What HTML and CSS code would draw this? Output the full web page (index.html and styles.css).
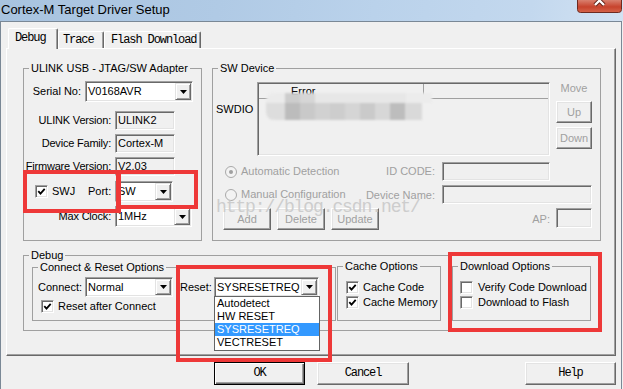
FILE: index.html
```html
<!DOCTYPE html>
<html>
<head>
<meta charset="utf-8">
<title>Cortex-M Target Driver Setup</title>
<link rel="stylesheet" href="styles.css">
</head>
<body>
<div class="win">
  <div class="titlebar">
    <span class="title">Cortex-M Target Driver Setup</span>
    <div class="close">
      <svg width="45" height="13" viewBox="0 0 45 13">
        <defs>
          <linearGradient id="cg" x1="0" y1="0" x2="0" y2="1">
            <stop offset="0" stop-color="#d9806e"/>
            <stop offset="0.55" stop-color="#c7432d"/>
            <stop offset="1" stop-color="#d5654b"/>
          </linearGradient>
        </defs>
        <path d="M0.5 0 V9.5 Q0.5 12.5 3.5 12.5 H41.5 Q44.5 12.5 44.5 9.5 V0" fill="url(#cg)" stroke="#6e2a20"/>
        <path d="M18 -4 L27 5 M27 -4 L18 5" stroke="#5a1d14" stroke-width="4.2"/>
        <path d="M18 -4 L27 5 M27 -4 L18 5" stroke="#ffffff" stroke-width="2.4"/>
      </svg>
    </div>
  </div>

  <div class="client">
    <div class="tabs">
      <div class="tab sel">Debug</div>
      <div class="tab t-trace">Trace</div>
      <div class="tab t-flash">Flash Download</div>
    </div>

    <div class="panel">
      <div class="row1">
        <fieldset class="grp ulink">
          <legend>ULINK USB - JTAG/SW Adapter</legend>
          <div class="serial">
            <span class="lbl-s">Serial No:</span>
            <div class="combo w108">
              <span class="ctext">V0168AVR</span>
              <span class="cbtn"><svg width="7" height="4" viewBox="0 0 7 4"><path d="M0 0H7L3.5 4Z"/></svg></span>
            </div>
          </div>
          <div class="irow r-ver"><span class="lbl">ULINK Version:</span><div class="field w60">ULINK2</div></div>
          <div class="irow r-fam"><span class="lbl">Device Family:</span><div class="field w60">Cortex-M</div></div>
          <div class="irow r-fw"><span class="lbl">Firmware Version:</span><div class="field w60">V2.03</div></div>
          <div class="swj">
            <span class="swj-left">
              <span class="chk"><svg width="9" height="9" viewBox="0 0 9 9"><path d="M1.3 4.2 L3.5 6.6 L7.7 1.8" fill="none" stroke="#000" stroke-width="1.8"/></svg></span>
              <span>SWJ</span>
            </span>
            <span class="lbl-port">Port:</span>
            <div class="combo w58">
              <span class="ctext">SW</span>
              <span class="cbtn"><svg width="7" height="4" viewBox="0 0 7 4"><path d="M0 0H7L3.5 4Z"/></svg></span>
            </div>
          </div>
          <div class="irow r-clk"><span class="lbl">Max Clock:</span>
            <div class="combo w77">
              <span class="ctext">1MHz</span>
              <span class="cbtn"><svg width="7" height="4" viewBox="0 0 7 4"><path d="M0 0H7L3.5 4Z"/></svg></span>
            </div>
          </div>
        </fieldset>

        <fieldset class="grp swdev">
          <legend>SW Device</legend>
          <div class="swtop">
            <span class="swdio">SWDIO</span>
            <div class="list">
              <div class="lhead"><span class="hc1">Error</span><span class="hc2"></span></div>
            </div>
            <div class="movecol">
              <span class="dis movelbl">Move</span>
              <div class="btn dis up">Up</div>
              <div class="btn dis down">Down</div>
            </div>
          </div>
          <div class="swrow r-auto">
            <span class="radio"><svg width="12" height="12" viewBox="0 0 12 12"><circle cx="6" cy="6" r="5.5" fill="#f3f3f3" stroke="#a9a9a9"/><circle cx="6" cy="6" r="2" fill="#a0a0a0"/></svg></span>
            <span class="dis">Automatic Detection</span>
            <span class="dis rlbl">ID CODE:</span>
            <div class="field w108"></div>
          </div>
          <div class="swrow r-man">
            <span class="radio"><svg width="12" height="12" viewBox="0 0 12 12"><circle cx="6" cy="6" r="5.5" fill="#f3f3f3" stroke="#a9a9a9"/></svg></span>
            <span class="dis">Manual Configuration</span>
            <span class="dis rlbl devlbl">Device Name:</span>
            <div class="field w150"></div>
          </div>
          <div class="swrow r-btns">
            <div class="btn dis sb">Add</div>
            <div class="btn dis sb">Delete</div>
            <div class="btn dis sb">Update</div>
            <span class="dis rlbl aplbl">AP:</span>
            <div class="field w36 aph"></div>
          </div>
        </fieldset>
      </div>

      <fieldset class="grp debug">
        <legend>Debug</legend>
        <div class="drow">
          <fieldset class="grp conn">
            <legend>Connect &amp; Reset Options</legend>
            <div class="crow1">
              <span class="lbl-c">Connect:</span>
              <div class="combo w88 h20">
                <span class="ctext">Normal</span>
                <span class="cbtn"><svg width="7" height="4" viewBox="0 0 7 4"><path d="M0 0H7L3.5 4Z"/></svg></span>
              </div>
              <span class="lbl-r">Reset:</span>
              <div class="combo w105 h20">
                <span class="ctext">SYSRESETREQ</span>
                <span class="cbtn"><svg width="7" height="4" viewBox="0 0 7 4"><path d="M0 0H7L3.5 4Z"/></svg></span>
              </div>
            </div>
            <div class="crow2">
              <span class="chk"><svg width="9" height="9" viewBox="0 0 9 9"><path d="M1.3 4.2 L3.5 6.6 L7.7 1.8" fill="none" stroke="#000" stroke-width="1.8"/></svg></span>
              <span>Reset after Connect</span>
            </div>
          </fieldset>

          <fieldset class="grp cache">
            <legend>Cache Options</legend>
            <div class="cbrow first">
              <span class="chk"><svg width="9" height="9" viewBox="0 0 9 9"><path d="M1.3 4.2 L3.5 6.6 L7.7 1.8" fill="none" stroke="#000" stroke-width="1.8"/></svg></span>
              <span>Cache Code</span>
            </div>
            <div class="cbrow">
              <span class="chk"><svg width="9" height="9" viewBox="0 0 9 9"><path d="M1.3 4.2 L3.5 6.6 L7.7 1.8" fill="none" stroke="#000" stroke-width="1.8"/></svg></span>
              <span>Cache Memory</span>
            </div>
          </fieldset>

          <fieldset class="grp dlopt">
            <legend>Download Options</legend>
            <div class="cbrow first dl">
              <span class="chk"></span>
              <span>Verify Code Download</span>
            </div>
            <div class="cbrow dl">
              <span class="chk"></span>
              <span>Download to Flash</span>
            </div>
          </fieldset>
        </div>
      </fieldset>
    </div>

    <div class="btnrow">
      <div class="btn pb ok">OK</div>
      <div class="btn pb cancel">Cancel</div>
      <div class="btn pb help">Help</div>
    </div>
  </div>

  <!-- overlays -->
  <div class="blur">
    <div class="b1"></div>
    <div class="b2"></div>
  </div>
  <div class="watermark">http://blog.csdn.net/</div>

  <div class="ddlist">
    <div>Autodetect</div>
    <div>HW RESET</div>
    <div class="hl">SYSRESETREQ</div>
    <div>VECTRESET</div>
  </div>

  <div class="redbox rb-swj"></div>
  <div class="redbox rb-port"></div>
  <div class="redbox rb-reset"></div>
  <div class="redbox rb-dl"></div>
</div>
</body>
</html>
```

FILE: styles.css
```css
* { box-sizing: border-box; }
html, body { margin: 0; padding: 0; }
body {
  width: 623px;
  height: 389px;
  overflow: hidden;
  background: #f0f0f0;
  font-family: "Liberation Sans", Arial, sans-serif;
  font-size: 11px;
  line-height: 13px;
  color: #000;
}
.win { position: relative; width: 623px; height: 389px; background: #f0f0f0; }

/* title bar */
.titlebar {
  height: 21px;
  display: flex;
  align-items: flex-start;
  background: linear-gradient(100deg, #a8c3df 0%, #b0cae5 35%, #bad2eb 60%, #c3d8ee 85%, #d2e2f3 100%);
}
.title { font-size: 13px; line-height: 19px; padding-left: 1px; white-space: nowrap; }
.close { margin-left: auto; margin-right: 1px; width: 45px; height: 13px; }
.close svg { display: block; }

/* client area */
.client {
  width: 622px;
  height: 368px;
  border: 1px solid #7a8896;
  border-bottom: none;
}

/* tabs */
.tabs { display: flex; align-items: flex-end; height: 26px; padding-left: 7px; }
.tab {
  font-family: "Liberation Mono", monospace;
  font-size: 12px;
  letter-spacing: -1.1px;
  height: 17px;
  display: flex;
  align-items: center;
  background: #f0f0f0;
  border: 1px solid;
  border-bottom: none;
  border-color: #fff #696969 #696969 #fff;
  box-shadow: inset -1px 0 #a0a0a0;
  border-radius: 2px 2px 0 0;
  white-space: nowrap;
  color: #000;
}
.tab.sel { width: 50px; height: 21px; margin-bottom: -1px; position: relative; z-index: 2; padding-left: 6px; padding-bottom: 1px; }
.t-trace { width: 46px; padding-left: 4px; }
.t-flash { width: 97px; padding-left: 6px; }

.panel {
  margin-left: 5px;
  width: 610px;
  height: 308px;
  border: 1px solid;
  border-color: #fff #696969 #696969 #fff;
  box-shadow: inset -1px -1px #a0a0a0;
  padding: 13px 0 0 16px;
}

/* group boxes */
.grp { margin: 0; padding: 0; border: 1px solid #a0a0a0; min-width: 0; }
.grp > legend { padding: 0 2px; margin-left: 5px; font-size: 11px; line-height: 13px; white-space: nowrap; }

.row1 { display: flex; gap: 10px; }
.ulink { width: 179px; height: 179px; }
.swdev { width: 389px; height: 179px; }

/* generic controls */
.field {
  height: 19px;
  background: #f0f0f0;
  border: 1px solid;
  border-color: #a0a0a0 #fff #fff #a0a0a0;
  box-shadow: inset 1px 1px #696969, inset -1px -1px #e3e3e3;
  padding-left: 2px;
  line-height: 17px;
  white-space: nowrap;
}
.w60 { width: 60px; }
.w108 { width: 108px; }
.w150 { width: 150px; }
.w36 { width: 36px; }
.w58 { width: 58px; }
.w77 { width: 77px; }
.w88 { width: 88px; }
.w105 { width: 105px; }

.combo {
  display: flex;
  height: 21px;
  background: #fff;
  border: 1px solid;
  border-color: #a0a0a0 #fff #fff #a0a0a0;
  box-shadow: inset 1px 1px #696969, inset -1px -1px #e3e3e3;
  padding: 1px;
}
.combo.h20 { height: 20px; }
.ctext { flex: 1; padding-left: 1px; display: flex; align-items: center; white-space: nowrap; overflow: hidden; }
.cbtn {
  width: 16px;
  flex: none;
  background: #f0f0f0;
  border: 1px solid;
  border-color: #e3e3e3 #696969 #696969 #e3e3e3;
  box-shadow: inset 1px 1px #fff, inset -1px -1px #a0a0a0;
  display: flex;
  align-items: center;
  justify-content: center;
}
.cbtn svg { display: block; }

.chk {
  width: 13px;
  height: 13px;
  flex: none;
  background: #fff;
  border: 1px solid;
  border-color: #a0a0a0 #fff #fff #a0a0a0;
  box-shadow: inset 1px 1px #696969, inset -1px -1px #e3e3e3;
  display: flex;
  align-items: center;
  justify-content: center;
}
.chk svg { display: block; }

.btn {
  background: #f0f0f0;
  border: 1px solid;
  border-color: #fff #696969 #696969 #fff;
  box-shadow: inset -1px -1px #a0a0a0, inset 1px 1px #e3e3e3;
  display: flex;
  align-items: center;
  justify-content: center;
  white-space: nowrap;
}
.dis { color: #a0a0a0; white-space: nowrap; }

/* ULINK rows */
.serial { display: flex; align-items: center; height: 21px; margin-top: 6px; }
.lbl-s { width: 57px; margin-right: 4px; text-align: right; white-space: nowrap; }
.irow { display: flex; align-items: center; }
.lbl { width: 87px; margin-right: 4px; display: flex; justify-content: flex-end; white-space: nowrap; letter-spacing: -0.2px; }
.r-ver { margin-top: 9px; height: 19px; }
.r-fam, .r-fw { margin-top: 4px; height: 19px; }
.swj { display: flex; align-items: center; height: 21px; margin-top: 5px; padding-left: 11px; }
.swj-left { width: 53px; display: flex; align-items: center; gap: 4px; }
.lbl-port { width: 23px; margin-right: 4px; text-align: right; }
.r-clk { margin-top: 4px; height: 21px; }

/* SW device */
.swtop { display: flex; margin-top: 7px; height: 74px; }
.swdio { width: 44px; padding-left: 3px; margin-top: 21px; }
.list {
  width: 293px;
  height: 74px;
  background: #f0f0f0;
  border: 1px solid;
  border-color: #a0a0a0 #fff #fff #a0a0a0;
  box-shadow: inset 1px 1px #696969, inset -1px -1px #e3e3e3;
  padding: 1px;
}
.lhead { display: flex; height: 15px; border-bottom: 1px solid #a0a0a0; }
.hc1 { width: 165px; border-right: 1px solid #a0a0a0; padding-left: 32px; line-height: 14px; }
.hc2 { flex: 1; }
.movecol { width: 36px; margin-left: 6px; display: flex; flex-direction: column; align-items: stretch; }
.movelbl { text-align: center; }
.up { height: 22px; margin-top: 6px; }
.down { height: 22px; margin-top: 4px; }

.swrow { display: flex; align-items: center; padding-left: 12px; height: 19px; }
.radio { width: 12px; height: 12px; margin-right: 4px; flex: none; }
.radio svg { display: block; }
.rlbl { margin-left: auto; margin-right: 7px; }
.r-auto { margin-top: 6px; padding-right: 50px; }
.r-man { margin-top: 4px; padding-right: 8px; }
.devlbl { position: relative; top: 1px; }
.r-btns { margin-top: 4px; height: 22px; padding-left: 10px; padding-right: 8px; align-items: flex-start; gap: 6px; }
.sb { width: 48px; height: 22px; }
.aplbl { margin-right: 0; align-self: center; }
.aph { height: 20px; }

/* Debug group */
.debug { width: 579px; height: 82px; margin-top: 8px; }
.drow { display: flex; align-items: flex-start; margin-top: -2px; padding-left: 8px; }
.conn { width: 304px; height: 60px; margin-top: 1px; }
.cache { width: 104px; height: 61px; margin-left: 1px; }
.dlopt { width: 139px; height: 61px; margin-left: 11px; }

.crow1 { display: flex; align-items: center; height: 20px; margin-top: 3px; padding-left: 5px; }
.lbl-c { width: 47px; white-space: nowrap; }
.lbl-r { width: 34px; margin-left: 7px; white-space: nowrap; }
.crow2 { display: flex; align-items: center; gap: 4px; height: 13px; margin-top: 3px; padding-left: 8px; }

.cbrow { display: flex; align-items: center; gap: 4px; height: 15px; padding-left: 8px; white-space: nowrap; }
.cbrow.first { margin-top: 7px; }
.cbrow.dl { padding-left: 7px; gap: 5px; }

/* bottom buttons */
.btnrow { display: flex; margin-top: 6px; padding-left: 213px; }
.pb { height: 23px; font-family: "Liberation Mono", monospace; font-size: 12px; letter-spacing: -1.1px; }
.ok { width: 91px; border: 1px solid #000; box-shadow: inset 1px 1px #fff, inset -1px -1px #696969, inset -2px -2px #a0a0a0; }
.cancel { width: 92px; margin-left: 12px; }
.help { width: 91px; margin-left: 116px; }

/* overlays */
.blur { position: absolute; left: 266px; top: 93px; width: 166px; height: 28px; filter: blur(1.2px); }
.b1 {
  height: 10px;
  border-radius: 8px 0 0 0;
  background: linear-gradient(90deg, #ebebeb 0 19px, #cdcdcd 19px 34px, #d6d6d6 34px 49px, #e7e7e7 49px 140px, #ececec 140px 166px);
}
.b2 {
  height: 17px;
  width: 156px;
  border-radius: 0 0 0 8px;
  background: linear-gradient(90deg, #dddddd 0 19px, #bcbcbc 19px 34px, #c9c9c9 34px 49px, #d1d1d1 49px 64px, #cdcdcd 64px 79px, #d5d5d5 79px 94px, #cacaca 94px 109px, #d7d7d7 109px 124px, #bdbdbd 124px 139px, #d9d9d9 139px 156px);
}
.watermark {
  position: absolute;
  left: 216px;
  top: 197px;
  font-family: "Liberation Mono", monospace;
  font-size: 18px;
  line-height: 20px;
  letter-spacing: -1.1px;
  color: #cdcdcd;
  white-space: nowrap;
}

.ddlist {
  position: absolute;
  left: 214px;
  top: 296px;
  width: 106px;
  height: 55px;
  background: #fff;
  border: 1px solid #646464;
}
.ddlist div { height: 13px; line-height: 13px; padding-left: 2px; white-space: nowrap; }
.ddlist .hl { background: #3399ff; color: #fff; }

.redbox { position: absolute; border: 4px solid #ee3838; }
.rb-swj { left: 23px; top: 170px; width: 98px; height: 43px; }
.rb-port { left: 116px; top: 170px; width: 82px; height: 39px; }
.rb-reset { left: 176px; top: 265px; width: 156px; height: 97px; }
.rb-dl { left: 448px; top: 252px; width: 154px; height: 80px; }
```
